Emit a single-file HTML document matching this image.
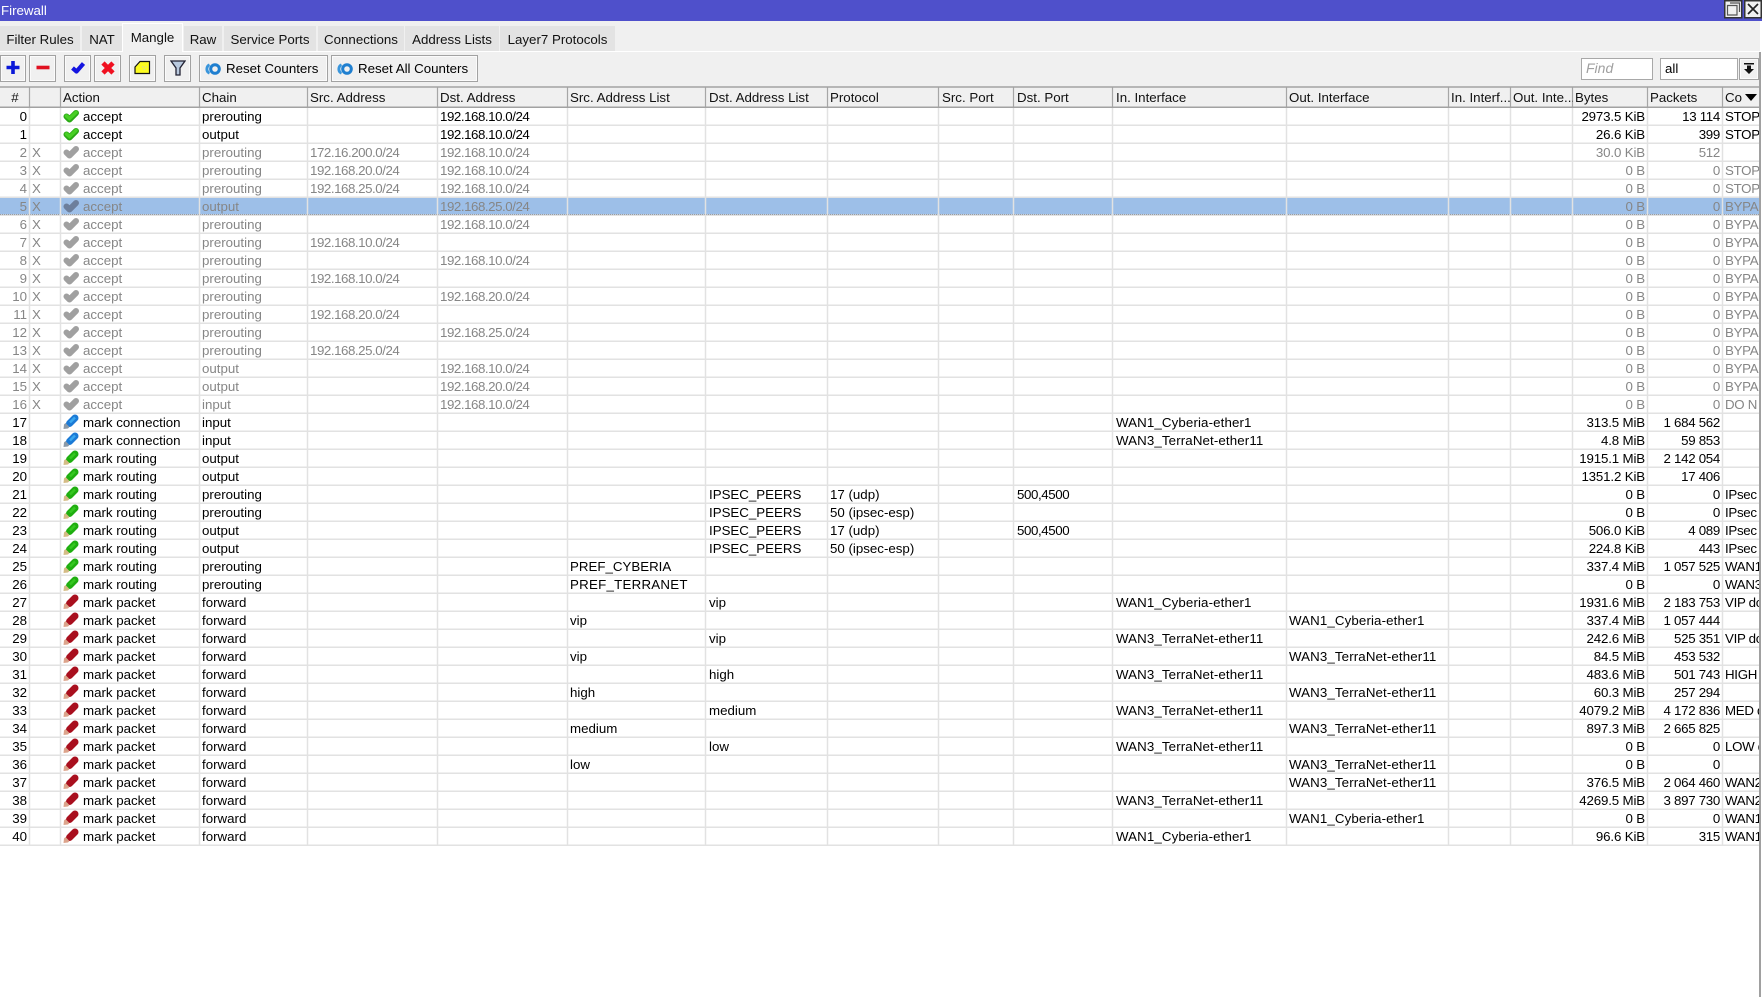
<!DOCTYPE html>
<html><head><meta charset="utf-8"><title>Firewall</title>
<style>
html,body{margin:0;padding:0;background:#fff;width:1762px;height:997px;overflow:hidden}
body{position:relative;font:13.3px/18px "Liberation Sans",sans-serif;color:#000}
.a{position:absolute}
#title{left:0;top:0;width:1762px;height:21px;background:#4f50cb;color:#fff;line-height:21px;padding-left:1px;box-sizing:border-box}
#bar{left:0;top:21px;width:1760px;height:66px;background:#f0f0f0}
.tab{position:absolute;top:26px;height:25px;background:#e3e3e3;line-height:27px;text-align:center;color:#111}
.tab.on{top:23px;height:29px;background:#f0f0f0;border-top:1px solid #fff;border-left:1px solid #fff;border-right:1px solid #fff;box-sizing:border-box;line-height:27px}
.btn{position:absolute;top:55px;height:27px;box-sizing:border-box;border:1.5px solid #a2a2a2;background:#f0f0f0;box-shadow:inset 0 0 0 1px #fbfbfb;line-height:24px}
.inp{position:absolute;top:58px;height:22px;box-sizing:border-box;border:1.5px solid #a8a8a8;background:#fff;line-height:19px;padding-left:4px}
#hbg{left:0;top:87px;width:1760px;height:21px;background:#f0f0f0}
#sel{left:0;top:197px;width:1759px;height:18px;background:#9dbfe8;border-top:1px dotted #555;border-bottom:1px dotted #555;box-sizing:border-box}
table{position:absolute;left:0;top:87px;width:1759px;table-layout:fixed;border-collapse:collapse}
td,th{padding:0 0 0 2px;height:18px;line-height:17px;overflow:hidden;white-space:nowrap;font-weight:400;text-align:left;box-sizing:border-box;vertical-align:top}
th{height:21px;line-height:18px;color:#111;vertical-align:top;padding-top:2px}
td:nth-child(1),th:nth-child(1){text-align:right;padding:0 3px 0 0}
th:nth-child(1){text-align:center;padding:2px 0 0}
td:nth-child(3){padding-left:22px;position:relative}
td:nth-child(8),td:nth-child(10),td:nth-child(11),td:nth-child(12),th:nth-child(8),th:nth-child(10),th:nth-child(11),th:nth-child(12){padding-left:3px}
td:nth-child(5),td:nth-child(6){letter-spacing:-.45px}
td:nth-child(11){letter-spacing:-.4px}
td:nth-child(12),td:nth-child(13){letter-spacing:.12px}
td:nth-child(16),td:nth-child(17){text-align:right;padding:0 3px 0 0}
td:nth-child(16){letter-spacing:-.15px}
td:nth-child(17){letter-spacing:-.3px}
td:nth-child(18){letter-spacing:-.3px}
tr.g td{color:#868686}
td:nth-child(3) svg{position:absolute;left:2px;top:0;width:16px;height:16px}
</style></head><body>
<svg width="0" height="0" style="position:absolute">
<symbol id="c" viewBox="0 0 16 16"><path d="M3.500 8.500L6.500 11.500L13 5" fill="none" stroke="#2aa815" stroke-width="6" stroke-linejoin="round" stroke-linecap="round"/><path d="M3.500 8L6.500 10.500L13 4.500" fill="none" stroke="#48cf24" stroke-width="3.500" stroke-linecap="round"/></symbol>
<symbol id="d" viewBox="0 0 16 16"><path d="M3.500 8.500L6.500 11.500L13 5" fill="none" stroke="#a0a0a0" stroke-width="6" stroke-linejoin="round" stroke-linecap="round"/></symbol>
<symbol id="e" viewBox="0 0 16 16"><path d="M3.500 8.500L6.500 11.500L13 5" fill="none" stroke="#6d7f9c" stroke-width="6" stroke-linejoin="round" stroke-linecap="round"/></symbol>
<symbol id="b" viewBox="0 0 16 16"><path d="M6.500 9.500L12 4" stroke="#1b7ad6" stroke-width="7" stroke-linecap="round"/><path d="M7 8.500L12 3.500" stroke="#3aa8f0" stroke-width="2.500"/><path d="M.5 15L1 10.500L2.500 9L6.500 13L5 14.500Z" fill="#8a99a8"/></symbol>
<symbol id="r" viewBox="0 0 16 16"><path d="M6.500 9.500L12 4" stroke="#1fae10" stroke-width="7" stroke-linecap="round"/><path d="M7 8.500L12 3.500" stroke="#35c820" stroke-width="2.500"/><path d="M.5 15L1 10.500L2.500 9L6.500 13L5 14.500Z" fill="#d4bc86"/></symbol>
<symbol id="p" viewBox="0 0 16 16"><path d="M6.500 9.500L12 4" stroke="#a90f1e" stroke-width="7" stroke-linecap="round"/><path d="M.5 15L1 10.500L2.500 9L6.500 13L5 14.500Z" fill="#dca48c"/></symbol>
<symbol id="z" viewBox="0 0 18 14"><path d="M5 1.500A6 6 0 0 0 5 12.500L6 10A3.500 3.500 0 0 1 6 4Z" fill="#3a96dc"/><circle cx="11" cy="7" r="4.300" fill="none" stroke="#1f7fd0" stroke-width="3"/></symbol>
</svg>

<div class="a" id="title">Firewall</div>
<svg class="a" style="left:1724px;top:0" width="38" height="19"><g fill="#f0f0f0" stroke="#333" stroke-width="1.500"><rect x=".75" y=".75" width="17" height="17"/><rect x="20.750" y=".75" width="16.500" height="17"/></g><path d="M3.500 5.500H13V15H3.500ZM6 3H15.500V12" fill="none" stroke="#555" stroke-width="1.200"/><path d="M24 4L34 14M34 4L24 14" stroke="#222" stroke-width="1.700"/></svg>

<div class="a" id="bar"></div>
<div class="a" style="left:0;top:51px;width:1760px;height:1px;background:#fff"></div>
<div class="tab" style="left:0;width:80px">Filter Rules</div>
<div class="tab" style="left:82px;width:40px">NAT</div>
<div class="tab on" style="left:122px;width:61px">Mangle</div>
<div class="tab" style="left:184px;width:38px">Raw</div>
<div class="tab" style="left:224px;width:92px">Service Ports</div>
<div class="tab" style="left:318px;width:86px">Connections</div>
<div class="tab" style="left:405px;width:94px">Address Lists</div>
<div class="tab" style="left:500px;width:115px">Layer7 Protocols</div>

<div class="btn" style="left:0;width:26px"><svg class="a" style="left:4px;top:3px" width="16" height="17"><path d="M8 2V15M1.500 8.500H14.500" stroke="#0a18d8" stroke-width="3.600"/></svg></div>
<div class="btn" style="left:29px;width:27px"><svg class="a" style="left:5px;top:3px" width="16" height="17"><path d="M1.500 8.500H14.500" stroke="#e01020" stroke-width="3.600"/></svg></div>
<div class="btn" style="left:64px;width:27px"><svg class="a" style="left:5px;top:3px" width="16" height="17"><path d="M2.500 9L6.500 12.500L13.500 4.500" fill="none" stroke="#1414e0" stroke-width="4.200" stroke-linejoin="round"/></svg></div>
<div class="btn" style="left:94px;width:27px"><svg class="a" style="left:5px;top:3px" width="16" height="17"><path d="M3 4L13 14M13 4L3 14" stroke="#f01020" stroke-width="4.600"/></svg></div>
<div class="btn" style="left:129px;width:27px"><svg class="a" style="left:4px;top:4px" width="17" height="15"><path d="M1 7L6 1.500H15.500V13.500H1Z" fill="#fcfc20" stroke="#111" stroke-width="1.200"/><path d="M8 7H9.500M11 7H12.500M9.500 9.500H11" stroke="#d8d8a0" stroke-width="1.300"/></svg></div>
<div class="btn" style="left:164px;width:27px"><svg class="a" style="left:5px;top:2px" width="16" height="19"><path d="M1 3H15L10 10V17H6V10Z" fill="#b9c9de" stroke="#223" stroke-width="1.300"/></svg></div>
<div class="btn" style="left:199px;width:129px"><svg class="a" style="left:4px;top:6px" width="18" height="14"><use href="#z"/></svg><span class="a" style="left:26px;top:1px;white-space:nowrap">Reset Counters</span></div>
<div class="btn" style="left:331px;width:147px"><svg class="a" style="left:4px;top:6px" width="18" height="14"><use href="#z"/></svg><span class="a" style="left:26px;top:1px;white-space:nowrap">Reset All Counters</span></div>

<div class="inp" style="left:1581px;width:72px;color:#a0a0a0;font-style:italic;font-size:14px">Find</div>
<div class="inp" style="left:1660px;width:78px">all</div>
<div class="btn" style="left:1739px;top:58px;width:20px;height:22px"><svg class="a" style="left:3px;top:2px" width="12" height="15"><path d="M1 2H11V3.500H1ZM4 4.500H8V8H11L6 13L1 8H4Z" fill="#111"/></svg></div>

<div class="a" id="hbg"></div>
<div class="a" id="sel"></div>
<svg class="a" style="left:0;top:0" width="1762" height="997">
<path d="M0 125.250H1759M0 143.250H1759M0 161.250H1759M0 179.250H1759M0 197.250H1759M0 215.250H1759M0 233.250H1759M0 251.250H1759M0 269.250H1759M0 287.250H1759M0 305.250H1759M0 323.250H1759M0 341.250H1759M0 359.250H1759M0 377.250H1759M0 395.250H1759M0 413.250H1759M0 431.250H1759M0 449.250H1759M0 467.250H1759M0 485.250H1759M0 503.250H1759M0 521.250H1759M0 539.250H1759M0 557.250H1759M0 575.250H1759M0 593.250H1759M0 611.250H1759M0 629.250H1759M0 647.250H1759M0 665.250H1759M0 683.250H1759M0 701.250H1759M0 719.250H1759M0 737.250H1759M0 755.250H1759M0 773.250H1759M0 791.250H1759M0 809.250H1759M0 827.250H1759M0 845.250H1759" stroke="#e2e2e2" stroke-width="1.500"/>
<path d="M29.500 107V846M60.500 107V846M199.500 107V846M307.500 107V846M437.500 107V846M567.500 107V846M705.500 107V846M827.500 107V846M938.500 107V846M1013.500 107V846M1112.500 107V846M1286.500 107V846M1448.500 107V846M1510.500 107V846M1572.500 107V846M1647.500 107V846M1722.500 107V846" stroke="#e2e2e2" stroke-width="1.500"/>
<path d="M29.500 87V107M60.500 87V107M199.500 87V107M307.500 87V107M437.500 87V107M567.500 87V107M705.500 87V107M827.500 87V107M938.500 87V107M1013.500 87V107M1112.500 87V107M1286.500 87V107M1448.500 87V107M1510.500 87V107M1572.500 87V107M1647.500 87V107M1722.500 87V107" stroke="#a6a6a6" stroke-width="1.200"/>
<path d="M0 87H1760M0 107.200H1760" stroke="#a2a2a2" stroke-width="1.500"/>
<path d="M1760 52V997" stroke="#a0a0a0" stroke-width="2"/>
</svg>
<svg class="a" style="left:1742px;top:91px" width="18" height="14"><path d="M3 3H15L9 10Z" fill="#000"/></svg>

<table>
<colgroup><col style="width:30px"><col style="width:31px"><col style="width:139px"><col style="width:108px"><col style="width:130px"><col style="width:130px"><col style="width:138px"><col style="width:122px"><col style="width:111px"><col style="width:75px"><col style="width:99px"><col style="width:174px"><col style="width:162px"><col style="width:62px"><col style="width:62px"><col style="width:75px"><col style="width:75px"><col style="width:36px"></colgroup>
<tr><th>#</th><th></th><th>Action</th><th>Chain</th><th>Src. Address</th><th>Dst. Address</th><th>Src. Address List</th><th>Dst. Address List</th><th>Protocol</th><th>Src. Port</th><th>Dst. Port</th><th>In. Interface</th><th>Out. Interface</th><th>In. Interf...</th><th>Out. Inte...</th><th>Bytes</th><th>Packets</th><th>Co</th></tr>
<tr><td>0</td><td></td><td><svg><use href="#c"/></svg>accept</td><td>prerouting</td><td></td><td>192.168.10.0/24</td><td></td><td></td><td></td><td></td><td></td><td></td><td></td><td></td><td></td><td>2973.5 KiB</td><td>13 114</td><td>STOP</td></tr>
<tr><td>1</td><td></td><td><svg><use href="#c"/></svg>accept</td><td>output</td><td></td><td>192.168.10.0/24</td><td></td><td></td><td></td><td></td><td></td><td></td><td></td><td></td><td></td><td>26.6 KiB</td><td>399</td><td>STOP</td></tr>
<tr class="g"><td>2</td><td>X</td><td><svg><use href="#d"/></svg>accept</td><td>prerouting</td><td>172.16.200.0/24</td><td>192.168.10.0/24</td><td></td><td></td><td></td><td></td><td></td><td></td><td></td><td></td><td></td><td>30.0 KiB</td><td>512</td><td></td></tr>
<tr class="g"><td>3</td><td>X</td><td><svg><use href="#d"/></svg>accept</td><td>prerouting</td><td>192.168.20.0/24</td><td>192.168.10.0/24</td><td></td><td></td><td></td><td></td><td></td><td></td><td></td><td></td><td></td><td>0 B</td><td>0</td><td>STOP</td></tr>
<tr class="g"><td>4</td><td>X</td><td><svg><use href="#d"/></svg>accept</td><td>prerouting</td><td>192.168.25.0/24</td><td>192.168.10.0/24</td><td></td><td></td><td></td><td></td><td></td><td></td><td></td><td></td><td></td><td>0 B</td><td>0</td><td>STOP</td></tr>
<tr class="g"><td>5</td><td>X</td><td><svg><use href="#e"/></svg>accept</td><td>output</td><td></td><td>192.168.25.0/24</td><td></td><td></td><td></td><td></td><td></td><td></td><td></td><td></td><td></td><td>0 B</td><td>0</td><td>BYPA</td></tr>
<tr class="g"><td>6</td><td>X</td><td><svg><use href="#d"/></svg>accept</td><td>prerouting</td><td></td><td>192.168.10.0/24</td><td></td><td></td><td></td><td></td><td></td><td></td><td></td><td></td><td></td><td>0 B</td><td>0</td><td>BYPA</td></tr>
<tr class="g"><td>7</td><td>X</td><td><svg><use href="#d"/></svg>accept</td><td>prerouting</td><td>192.168.10.0/24</td><td></td><td></td><td></td><td></td><td></td><td></td><td></td><td></td><td></td><td></td><td>0 B</td><td>0</td><td>BYPA</td></tr>
<tr class="g"><td>8</td><td>X</td><td><svg><use href="#d"/></svg>accept</td><td>prerouting</td><td></td><td>192.168.10.0/24</td><td></td><td></td><td></td><td></td><td></td><td></td><td></td><td></td><td></td><td>0 B</td><td>0</td><td>BYPA</td></tr>
<tr class="g"><td>9</td><td>X</td><td><svg><use href="#d"/></svg>accept</td><td>prerouting</td><td>192.168.10.0/24</td><td></td><td></td><td></td><td></td><td></td><td></td><td></td><td></td><td></td><td></td><td>0 B</td><td>0</td><td>BYPA</td></tr>
<tr class="g"><td>10</td><td>X</td><td><svg><use href="#d"/></svg>accept</td><td>prerouting</td><td></td><td>192.168.20.0/24</td><td></td><td></td><td></td><td></td><td></td><td></td><td></td><td></td><td></td><td>0 B</td><td>0</td><td>BYPA</td></tr>
<tr class="g"><td>11</td><td>X</td><td><svg><use href="#d"/></svg>accept</td><td>prerouting</td><td>192.168.20.0/24</td><td></td><td></td><td></td><td></td><td></td><td></td><td></td><td></td><td></td><td></td><td>0 B</td><td>0</td><td>BYPA</td></tr>
<tr class="g"><td>12</td><td>X</td><td><svg><use href="#d"/></svg>accept</td><td>prerouting</td><td></td><td>192.168.25.0/24</td><td></td><td></td><td></td><td></td><td></td><td></td><td></td><td></td><td></td><td>0 B</td><td>0</td><td>BYPA</td></tr>
<tr class="g"><td>13</td><td>X</td><td><svg><use href="#d"/></svg>accept</td><td>prerouting</td><td>192.168.25.0/24</td><td></td><td></td><td></td><td></td><td></td><td></td><td></td><td></td><td></td><td></td><td>0 B</td><td>0</td><td>BYPA</td></tr>
<tr class="g"><td>14</td><td>X</td><td><svg><use href="#d"/></svg>accept</td><td>output</td><td></td><td>192.168.10.0/24</td><td></td><td></td><td></td><td></td><td></td><td></td><td></td><td></td><td></td><td>0 B</td><td>0</td><td>BYPA</td></tr>
<tr class="g"><td>15</td><td>X</td><td><svg><use href="#d"/></svg>accept</td><td>output</td><td></td><td>192.168.20.0/24</td><td></td><td></td><td></td><td></td><td></td><td></td><td></td><td></td><td></td><td>0 B</td><td>0</td><td>BYPA</td></tr>
<tr class="g"><td>16</td><td>X</td><td><svg><use href="#d"/></svg>accept</td><td>input</td><td></td><td>192.168.10.0/24</td><td></td><td></td><td></td><td></td><td></td><td></td><td></td><td></td><td></td><td>0 B</td><td>0</td><td>DO N</td></tr>
<tr><td>17</td><td></td><td><svg><use href="#b"/></svg>mark connection</td><td>input</td><td></td><td></td><td></td><td></td><td></td><td></td><td></td><td>WAN1_Cyberia-ether1</td><td></td><td></td><td></td><td>313.5 MiB</td><td>1 684 562</td><td></td></tr>
<tr><td>18</td><td></td><td><svg><use href="#b"/></svg>mark connection</td><td>input</td><td></td><td></td><td></td><td></td><td></td><td></td><td></td><td>WAN3_TerraNet-ether11</td><td></td><td></td><td></td><td>4.8 MiB</td><td>59 853</td><td></td></tr>
<tr><td>19</td><td></td><td><svg><use href="#r"/></svg>mark routing</td><td>output</td><td></td><td></td><td></td><td></td><td></td><td></td><td></td><td></td><td></td><td></td><td></td><td>1915.1 MiB</td><td>2 142 054</td><td></td></tr>
<tr><td>20</td><td></td><td><svg><use href="#r"/></svg>mark routing</td><td>output</td><td></td><td></td><td></td><td></td><td></td><td></td><td></td><td></td><td></td><td></td><td></td><td>1351.2 KiB</td><td>17 406</td><td></td></tr>
<tr><td>21</td><td></td><td><svg><use href="#r"/></svg>mark routing</td><td>prerouting</td><td></td><td></td><td></td><td>IPSEC_PEERS</td><td>17 (udp)</td><td></td><td>500,4500</td><td></td><td></td><td></td><td></td><td>0 B</td><td>0</td><td>IPsec</td></tr>
<tr><td>22</td><td></td><td><svg><use href="#r"/></svg>mark routing</td><td>prerouting</td><td></td><td></td><td></td><td>IPSEC_PEERS</td><td>50 (ipsec-esp)</td><td></td><td></td><td></td><td></td><td></td><td></td><td>0 B</td><td>0</td><td>IPsec</td></tr>
<tr><td>23</td><td></td><td><svg><use href="#r"/></svg>mark routing</td><td>output</td><td></td><td></td><td></td><td>IPSEC_PEERS</td><td>17 (udp)</td><td></td><td>500,4500</td><td></td><td></td><td></td><td></td><td>506.0 KiB</td><td>4 089</td><td>IPsec</td></tr>
<tr><td>24</td><td></td><td><svg><use href="#r"/></svg>mark routing</td><td>output</td><td></td><td></td><td></td><td>IPSEC_PEERS</td><td>50 (ipsec-esp)</td><td></td><td></td><td></td><td></td><td></td><td></td><td>224.8 KiB</td><td>443</td><td>IPsec</td></tr>
<tr><td>25</td><td></td><td><svg><use href="#r"/></svg>mark routing</td><td>prerouting</td><td></td><td></td><td>PREF_CYBERIA</td><td></td><td></td><td></td><td></td><td></td><td></td><td></td><td></td><td>337.4 MiB</td><td>1 057 525</td><td>WAN1</td></tr>
<tr><td>26</td><td></td><td><svg><use href="#r"/></svg>mark routing</td><td>prerouting</td><td></td><td></td><td style="letter-spacing:.25px">PREF_TERRANET</td><td></td><td></td><td></td><td></td><td></td><td></td><td></td><td></td><td>0 B</td><td>0</td><td>WAN3</td></tr>
<tr><td>27</td><td></td><td><svg><use href="#p"/></svg>mark packet</td><td>forward</td><td></td><td></td><td></td><td>vip</td><td></td><td></td><td></td><td>WAN1_Cyberia-ether1</td><td></td><td></td><td></td><td>1931.6 MiB</td><td>2 183 753</td><td>VIP do</td></tr>
<tr><td>28</td><td></td><td><svg><use href="#p"/></svg>mark packet</td><td>forward</td><td></td><td></td><td>vip</td><td></td><td></td><td></td><td></td><td></td><td>WAN1_Cyberia-ether1</td><td></td><td></td><td>337.4 MiB</td><td>1 057 444</td><td></td></tr>
<tr><td>29</td><td></td><td><svg><use href="#p"/></svg>mark packet</td><td>forward</td><td></td><td></td><td></td><td>vip</td><td></td><td></td><td></td><td>WAN3_TerraNet-ether11</td><td></td><td></td><td></td><td>242.6 MiB</td><td>525 351</td><td>VIP do</td></tr>
<tr><td>30</td><td></td><td><svg><use href="#p"/></svg>mark packet</td><td>forward</td><td></td><td></td><td>vip</td><td></td><td></td><td></td><td></td><td></td><td>WAN3_TerraNet-ether11</td><td></td><td></td><td>84.5 MiB</td><td>453 532</td><td></td></tr>
<tr><td>31</td><td></td><td><svg><use href="#p"/></svg>mark packet</td><td>forward</td><td></td><td></td><td></td><td>high</td><td></td><td></td><td></td><td>WAN3_TerraNet-ether11</td><td></td><td></td><td></td><td>483.6 MiB</td><td>501 743</td><td>HIGH</td></tr>
<tr><td>32</td><td></td><td><svg><use href="#p"/></svg>mark packet</td><td>forward</td><td></td><td></td><td>high</td><td></td><td></td><td></td><td></td><td></td><td>WAN3_TerraNet-ether11</td><td></td><td></td><td>60.3 MiB</td><td>257 294</td><td></td></tr>
<tr><td>33</td><td></td><td><svg><use href="#p"/></svg>mark packet</td><td>forward</td><td></td><td></td><td></td><td>medium</td><td></td><td></td><td></td><td>WAN3_TerraNet-ether11</td><td></td><td></td><td></td><td>4079.2 MiB</td><td>4 172 836</td><td>MED d</td></tr>
<tr><td>34</td><td></td><td><svg><use href="#p"/></svg>mark packet</td><td>forward</td><td></td><td></td><td>medium</td><td></td><td></td><td></td><td></td><td></td><td>WAN3_TerraNet-ether11</td><td></td><td></td><td>897.3 MiB</td><td>2 665 825</td><td></td></tr>
<tr><td>35</td><td></td><td><svg><use href="#p"/></svg>mark packet</td><td>forward</td><td></td><td></td><td></td><td>low</td><td></td><td></td><td></td><td>WAN3_TerraNet-ether11</td><td></td><td></td><td></td><td>0 B</td><td>0</td><td>LOW d</td></tr>
<tr><td>36</td><td></td><td><svg><use href="#p"/></svg>mark packet</td><td>forward</td><td></td><td></td><td>low</td><td></td><td></td><td></td><td></td><td></td><td>WAN3_TerraNet-ether11</td><td></td><td></td><td>0 B</td><td>0</td><td></td></tr>
<tr><td>37</td><td></td><td><svg><use href="#p"/></svg>mark packet</td><td>forward</td><td></td><td></td><td></td><td></td><td></td><td></td><td></td><td></td><td>WAN3_TerraNet-ether11</td><td></td><td></td><td>376.5 MiB</td><td>2 064 460</td><td>WAN2</td></tr>
<tr><td>38</td><td></td><td><svg><use href="#p"/></svg>mark packet</td><td>forward</td><td></td><td></td><td></td><td></td><td></td><td></td><td></td><td>WAN3_TerraNet-ether11</td><td></td><td></td><td></td><td>4269.5 MiB</td><td>3 897 730</td><td>WAN2</td></tr>
<tr><td>39</td><td></td><td><svg><use href="#p"/></svg>mark packet</td><td>forward</td><td></td><td></td><td></td><td></td><td></td><td></td><td></td><td></td><td>WAN1_Cyberia-ether1</td><td></td><td></td><td>0 B</td><td>0</td><td>WAN1</td></tr>
<tr><td>40</td><td></td><td><svg><use href="#p"/></svg>mark packet</td><td>forward</td><td></td><td></td><td></td><td></td><td></td><td></td><td></td><td>WAN1_Cyberia-ether1</td><td></td><td></td><td></td><td>96.6 KiB</td><td>315</td><td>WAN1</td></tr>
</table>
</body></html>
